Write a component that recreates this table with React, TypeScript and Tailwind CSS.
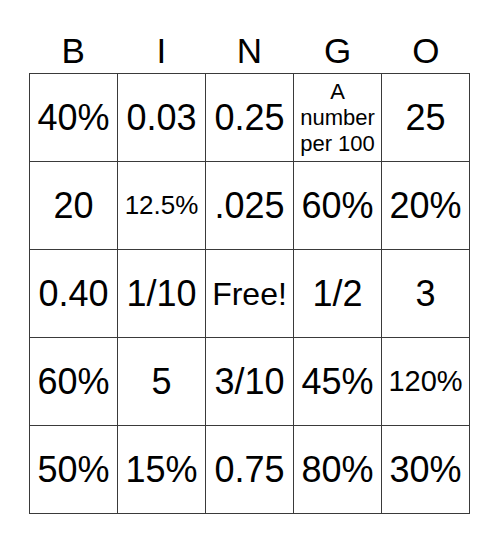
const letters = ["B", "I", "N", "G", "O"];

type Cell = { text: string; size?: string };

const cells: Cell[] = [
  { text: "40%" },
  { text: "0.03" },
  { text: "0.25" },
  { text: "A number per 100", size: "text-[22px] leading-[26px] px-1" },
  { text: "25" },
  { text: "20" },
  { text: "12.5%", size: "text-[26px]" },
  { text: ".025" },
  { text: "60%" },
  { text: "20%" },
  { text: "0.40" },
  { text: "1/10" },
  { text: "Free!", size: "text-[32px]" },
  { text: "1/2" },
  { text: "3" },
  { text: "60%" },
  { text: "5" },
  { text: "3/10" },
  { text: "45%" },
  { text: "120%", size: "text-[29px]" },
  { text: "50%" },
  { text: "15%" },
  { text: "0.75" },
  { text: "80%" },
  { text: "30%" },
];

export default function App() {
  return (
    <div className="h-[544px] w-[500px] bg-white font-['Liberation_Sans',Arial,sans-serif] text-black">
      <div className="ml-[29px] w-[441px] pt-[33px]">
        {/* header */}
        <div className="grid h-[40px] grid-cols-5 items-end pb-[5px]">
          {letters.map((l) => (
            <div key={l} className="text-center text-[35px] leading-none">
              {l}
            </div>
          ))}
        </div>

        {/* card */}
        <div className="grid grid-cols-5 gap-px border border-[#3a3a3a] bg-[#3a3a3a]">
          {cells.map((c, i) => (
            <div
              key={i}
              className={`flex h-[87px] items-center justify-center bg-white text-center ${
                c.size ?? "text-[36px]"
              }`}
            >
              {c.text}
            </div>
          ))}
        </div>
      </div>
    </div>
  );
}
